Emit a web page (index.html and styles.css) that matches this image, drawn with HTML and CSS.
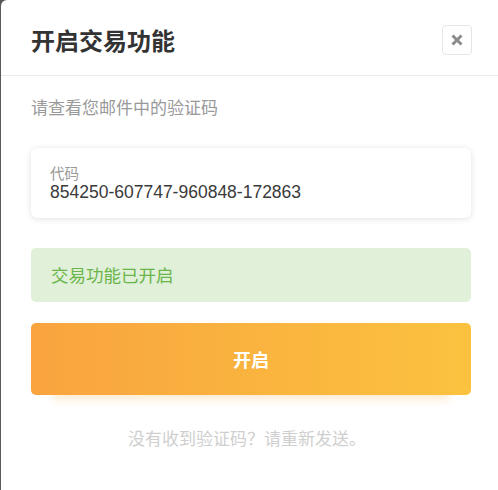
FILE: index.html
```html
<!DOCTYPE html>
<html lang="zh">
<head>
<meta charset="utf-8">
<title>开启交易功能</title>
<link rel="stylesheet" href="styles.css">
</head>
<body>
<div class="modal">
  <div class="modal-header">
    <h2 class="modal-title">开启交易功能</h2>
    <button class="close-btn" aria-label="关闭">
      <svg width="14" height="14" viewBox="0 0 14 14"><path d="M2.5 2.5 L11.5 11.5 M11.5 2.5 L2.5 11.5" stroke="#8c8c8c" stroke-width="3" stroke-linecap="butt"/></svg>
    </button>
  </div>
  <div class="modal-body">
    <p class="hint">请查看您邮件中的验证码</p>
    <div class="field">
      <div class="field-label">代码</div>
      <div class="field-value">854250-607747-960848-172863</div>
    </div>
    <div class="alert">交易功能已开启</div>
    <button class="submit">开启</button>
    <p class="resend">没有收到验证码？请重新发送。</p>
  </div>
</div>
</body>
</html>
```
FILE: styles.css
```css
html, body {
  margin: 0;
  padding: 0;
}
body {
  background: #595959;
  overflow: hidden;
  width: 498px;
  height: 490px;
  font-family: "Liberation Sans", "Noto Sans CJK SC", sans-serif;
}
.modal {
  margin-left: 1px;
  width: 500px;
  height: 490px;
  background: #fff;
  border-top-left-radius: 6px;
}
.modal-header {
  display: flex;
  align-items: center;
  justify-content: space-between;
  height: 30px;
  padding: 25px 29px 20px 30px;
  border-bottom: 1px solid #e9e9e9;
}
.modal-title {
  margin: 0;
  font-size: 24px;
  line-height: 30px;
  font-weight: bold;
  color: #333;
  font-family: "Noto Sans CJK SC", sans-serif;
}
.close-btn {
  width: 30px;
  height: 30px;
  padding: 0;
  border: 1px solid #e6e6e6;
  border-radius: 4px;
  background: #fff;
  display: flex;
  align-items: center;
  justify-content: center;
}
.modal-body {
  padding: 19px 30px 0 30px;
  width: 440px;
}
.hint {
  margin: 0;
  font-size: 17px;
  line-height: 24px;
  color: #999;
  font-family: "Noto Sans CJK SC", sans-serif;
}
.field {
  margin-top: 29px;
  height: 38px;
  padding: 16px 19px;
  border-radius: 6px;
  background: #fff;
  box-shadow: 0 1px 6px rgba(0, 0, 0, 0.12);
}
.field-label {
  font-size: 14.5px;
  line-height: 18px;
  color: #999;
  font-family: "Noto Sans CJK SC", sans-serif;
}
.field-value {
  font-size: 17.5px;
  line-height: 20px;
  color: #3a3a3a;
}
.alert {
  margin-top: 30px;
  height: 54px;
  line-height: 54px;
  padding-left: 20px;
  border-radius: 5px;
  background: #e1f0d9;
  color: #6ab54a;
  font-size: 17.5px;
  font-family: "Noto Sans CJK SC", sans-serif;
}
.submit {
  display: block;
  margin-top: 21px;
  width: 440px;
  height: 72px;
  border: 0;
  border-radius: 5px;
  background: linear-gradient(90deg, #f9a43f 0%, #fbc23f 100%);
  box-shadow: 0 27px 8px -22px rgba(250, 170, 60, 0.22);
  color: #fff;
  font-size: 18px;
  font-weight: bold;
  font-family: "Noto Sans CJK SC", sans-serif;
}
.resend {
  margin: 31px 0 0 0;
  text-align: center;
  font-size: 17px;
  line-height: 24px;
  color: #cfcfcf;
  padding-right: 8px;
  font-family: "Noto Sans CJK SC", sans-serif;
}
```
